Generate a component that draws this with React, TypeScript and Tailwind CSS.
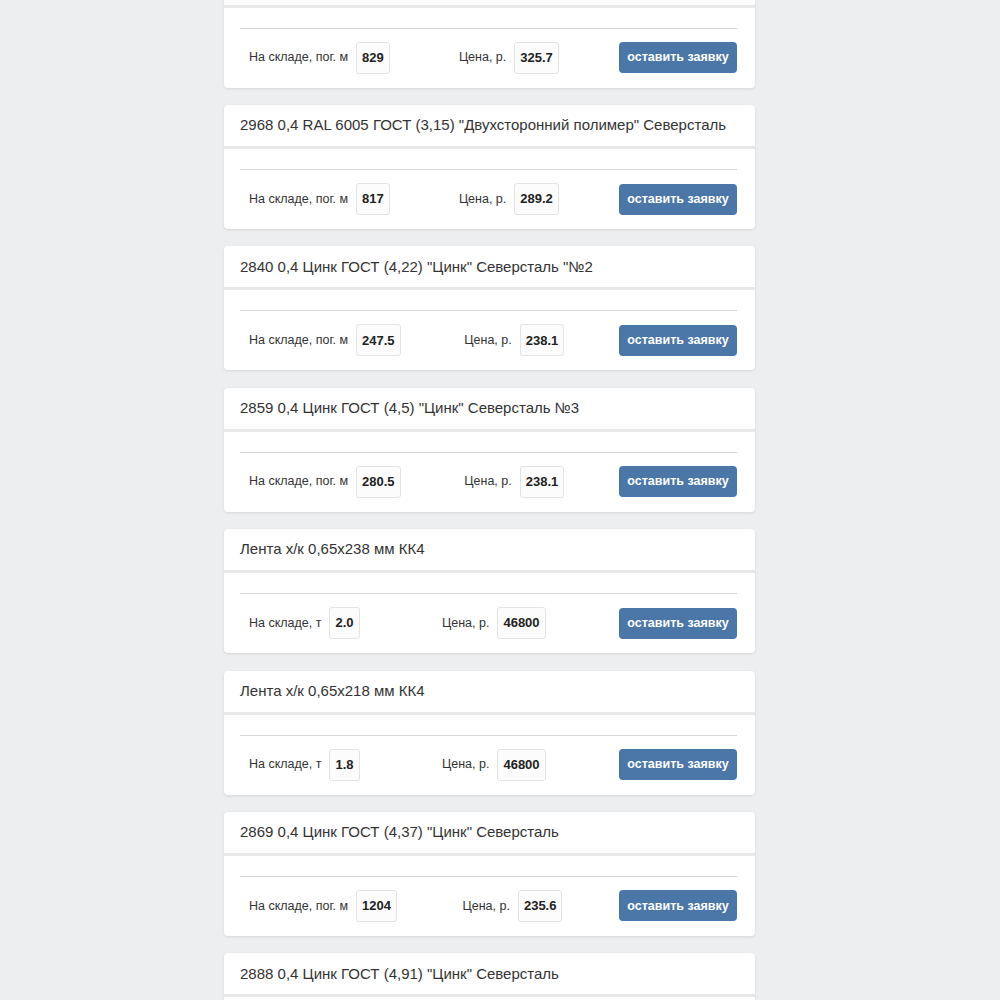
import React from "react";

type Item = {
  title: string;
  unit: string;
  stock: string;
  price: string;
};

const items: Item[] = [
  { title: '2967 0,4 RAL 3005 ГОСТ (3,15) "Двухсторонний полимер" Северсталь', unit: "пог. м", stock: "829", price: "325.7" },
  { title: '2968 0,4 RAL 6005 ГОСТ (3,15) "Двухсторонний полимер" Северсталь', unit: "пог. м", stock: "817", price: "289.2" },
  { title: '2840 0,4 Цинк ГОСТ (4,22) "Цинк" Северсталь "№2', unit: "пог. м", stock: "247.5", price: "238.1" },
  { title: '2859 0,4 Цинк ГОСТ (4,5) "Цинк" Северсталь №3', unit: "пог. м", stock: "280.5", price: "238.1" },
  { title: "Лента х/к 0,65х238 мм КК4", unit: "т", stock: "2.0", price: "46800" },
  { title: "Лента х/к 0,65х218 мм КК4", unit: "т", stock: "1.8", price: "46800" },
  { title: '2869 0,4 Цинк ГОСТ (4,37) "Цинк" Северсталь', unit: "пог. м", stock: "1204", price: "235.6" },
  { title: '2888 0,4 Цинк ГОСТ (4,91) "Цинк" Северсталь', unit: "пог. м", stock: "310.2", price: "235.6" },
];

function Card({ item }: { item: Item }) {
  return (
    <div className="w-[531px] bg-white rounded-[4px] shadow-[0_1px_3px_rgba(0,0,0,0.10)] overflow-hidden">
      <div className="h-[44px] flex items-center px-4 border-b-[3px] border-[#e7e8ea] text-[15px] text-[#333333]">
        {item.title}
      </div>
      <div className="pl-4 pr-[18px] pt-5 pb-[14px]">
        <div className="border-t border-[#d8d8d8]" />
        <div className="mt-[13px] h-8 flex items-center justify-between text-[12.5px] text-[#333333]">
          <div className="flex items-center gap-2 pl-[9px]">
            <span>На складе, {item.unit}</span>
            <span className="h-8 flex items-center px-[5px] border border-[#e3e3e3] rounded-[3px] bg-[#fcfcfc] text-[13px] font-bold text-[#222222]">
              {item.stock}
            </span>
          </div>
          <div className="flex items-center gap-2 pl-[9px]">
            <span>Цена, р.</span>
            <span className="h-8 flex items-center px-[5px] border border-[#e3e3e3] rounded-[3px] bg-[#fcfcfc] text-[13px] font-bold text-[#222222]">
              {item.price}
            </span>
          </div>
          <button className="w-[118px] h-[31px] rounded-[4px] bg-[#4a76a8] text-white font-bold text-[12.5px] flex items-center justify-center">
            оставить заявку
          </button>
        </div>
      </div>
    </div>
  );
}

export default function App() {
  return (
    <div className="h-[1000px] overflow-hidden bg-[#edeef0]" style={{ fontFamily: '"Liberation Sans", Arial, sans-serif' }}>
      <div className="pt-px">
        <div className="-mt-[37.4px] ml-[224px] flex flex-col gap-[17.4px]">
          {items.map((it, i) => (
            <Card key={i} item={it} />
          ))}
        </div>
      </div>
    </div>
  );
}
